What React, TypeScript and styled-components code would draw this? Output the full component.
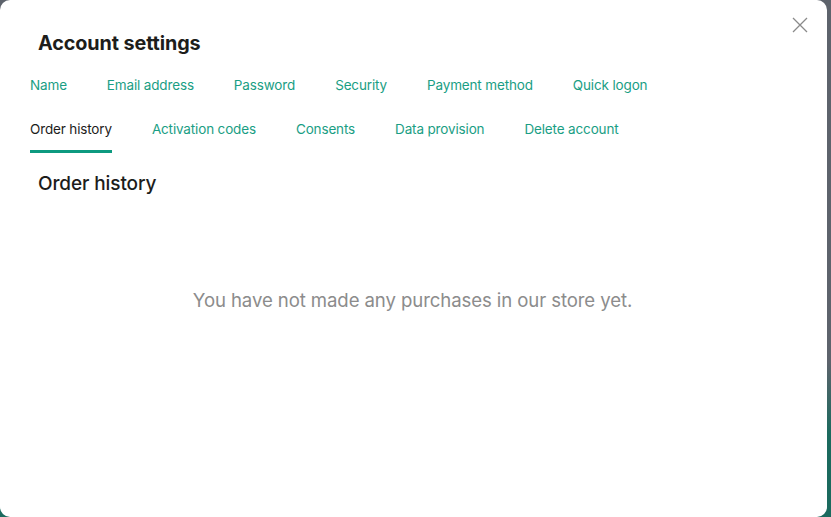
import React from "react";
import styled, { createGlobalStyle } from "styled-components";

const Global = createGlobalStyle`
  html, body { margin: 0; padding: 0; }
  body {
    width: 831px; height: 517px; overflow: hidden;
    font-family: Inter, "Noto Sans", Arial, sans-serif;
    background: linear-gradient(180deg, #5d636c 0%, #5d636c 70%, #1b6a5e 84%, #1b6a5e 100%);
  }
`;

const Backdrop = styled.div`
  width: 831px;
  height: 517px;
  display: flex;
  align-items: stretch;
`;

const Modal = styled.div`
  position: relative;
  width: 827px;
  height: 517px;
  background: #fff;
  border-radius: 10px;
  box-sizing: border-box;
  padding: 30px 30px 0 30px;
  display: flex;
  flex-direction: column;
`;

const Close = styled.button`
  position: absolute;
  top: 17px;
  right: 19px;
  width: 16px;
  height: 16px;
  padding: 0;
  border: 0;
  background: transparent;
  display: flex;
  align-items: center;
  justify-content: center;
`;

const Title = styled.h1`
  margin: 0 0 0 8px;
  font-size: 19.8px;
  line-height: 26px;
  font-weight: 700;
  color: #1d1d1b;
  letter-spacing: -0.1px;
`;

const Tabs = styled.nav`
  margin-top: 9px;
  display: flex;
  flex-wrap: wrap;
  column-gap: 40px;
  row-gap: 0;
  max-width: 700px;
`;

const Tab = styled.a<{ $active?: boolean }>`
  display: block;
  font-size: 13.5px;
  line-height: 20px;
  padding: 10px 0 11px;
  letter-spacing: -0.15px;
  color: ${(p) => (p.$active ? "#1d1d1b" : "#1a9e84")};
  border-bottom: 3px solid ${(p) => (p.$active ? "#0d9a80" : "transparent")};
  cursor: pointer;
  white-space: nowrap;
`;

const Section = styled.h2`
  margin: 18px 0 0 8px;
  font-size: 19px;
  line-height: 26px;
  font-weight: 500;
  color: #1d1d1b;
  letter-spacing: -0.1px;
`;

const Empty = styled.p`
  margin: 91px 0 0 0;
  text-align: center;
  font-size: 18.6px;
  line-height: 24px;
  color: #8c8c8c;
  letter-spacing: -0.1px;
  padding-right: 2px;
`;

const rows = [
  ["Name", "Email address", "Password", "Security", "Payment method", "Quick logon"],
  ["Order history", "Activation codes", "Consents", "Data provision", "Delete account"],
];

export default function App() {
  return (
    <>
      <Global />
      <Backdrop>
        <Modal>
          <Close aria-label="Close">
            <svg width="16" height="16" viewBox="0 0 16 16">
              <path d="M1 1 L15 15 M15 1 L1 15" stroke="#8a8a8a" strokeWidth="1.3" fill="none" />
            </svg>
          </Close>
          <Title>Account settings</Title>
          <Tabs>
            {rows.flat().map((t) => (
              <Tab key={t} $active={t === "Order history"}>{t}</Tab>
            ))}
          </Tabs>
          <Section>Order history</Section>
          <Empty>You have not made any purchases in our store yet.</Empty>
        </Modal>
      </Backdrop>
    </>
  );
}
